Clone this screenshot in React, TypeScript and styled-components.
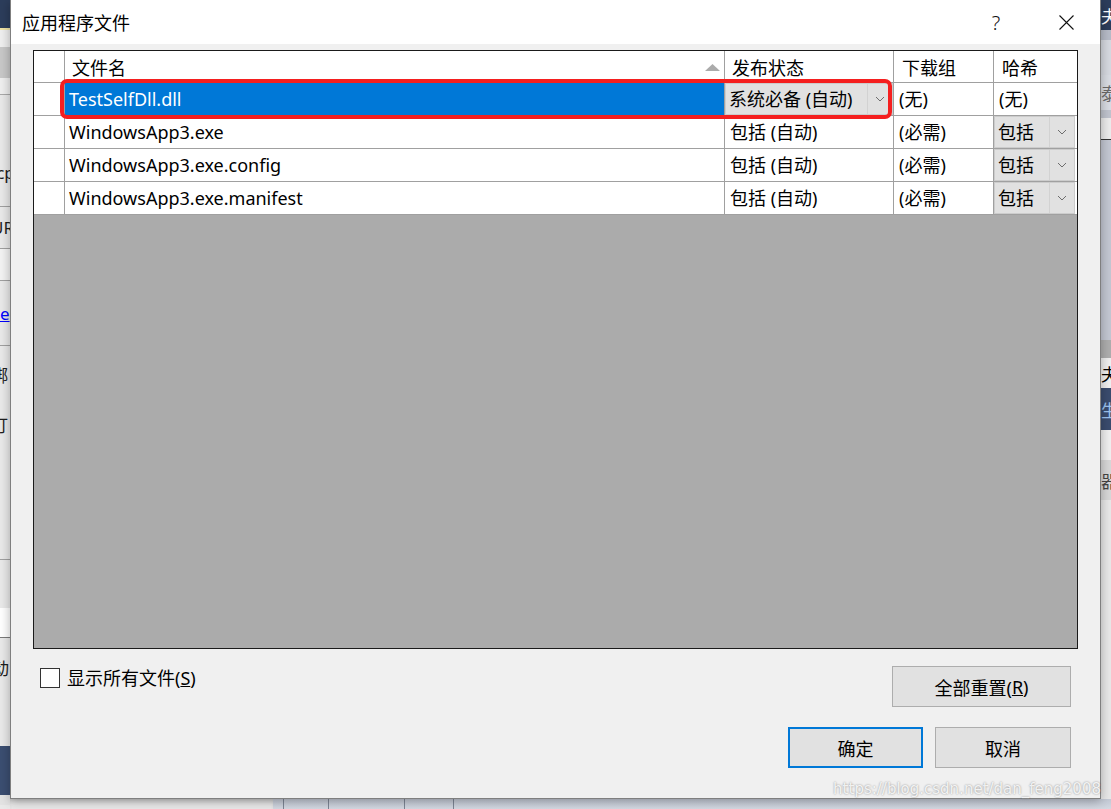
import React from "react";
import styled, { createGlobalStyle } from "styled-components";

const FONT = `"Noto Sans", "Noto Sans CJK SC", sans-serif`;

interface FileRow {
  name: string;
  status: string;
  statusCombo?: boolean;
  group: string;
  hash: string;
  hashCombo?: boolean;
  selected?: boolean;
}

const rows: FileRow[] = [
  { name: "TestSelfDll.dll", status: "系统必备 (自动)", statusCombo: true, group: "(无)", hash: "(无)", selected: true },
  { name: "WindowsApp3.exe", status: "包括 (自动)", group: "(必需)", hash: "包括", hashCombo: true },
  { name: "WindowsApp3.exe.config", status: "包括 (自动)", group: "(必需)", hash: "包括", hashCombo: true },
  { name: "WindowsApp3.exe.manifest", status: "包括 (自动)", group: "(必需)", hash: "包括", hashCombo: true },
];

interface BandSpec {
  h: number;
  bg: string;
  line?: string;
  text?: string;
  color?: string;
  shift?: number;
  link?: boolean;
}

// what shows of the Visual Studio window behind the dialog
const leftBands: BandSpec[] = [
  { h: 28, bg: "#2c3d5b" },
  { h: 2, bg: "#efe3a6" },
  { h: 17, bg: "#efefef" },
  { h: 31, bg: "#c8c8c8" },
  { h: 17, bg: "#efefef", line: "#a9a9a9" },
  { h: 44, bg: "#e9e9e9" },
  { h: 68, bg: "#e9e9e9", line: "#a0a0a0", text: "tcp", shift: -10 },
  { h: 42, bg: "#e9e9e9", line: "#a0a0a0", text: "URL", shift: -9 },
  { h: 32, bg: "#f3f3f3", line: "#a0a0a0" },
  { h: 65, bg: "#e9e9e9", line: "#a0a0a0", text: "e", shift: 0, link: true, color: "#0000ff" },
  { h: 56, bg: "#e9e9e9", text: "绑", shift: -9 },
  { h: 45, bg: "#e9e9e9", text: "订", shift: -9 },
  { h: 113, bg: "#e9e9e9", line: "#a0a0a0" },
  { h: 48, bg: "#e9e9e9" },
  { h: 30, bg: "#ffffff", line: "#7a7a7a" },
  { h: 58, bg: "#e9e9e9", text: "动", shift: -8 },
  { h: 50, bg: "#e9e9e9" },
  { h: 49, bg: "#3b4e71" },
  { h: 10, bg: "#e3e3e3" },
];

const rightBands: BandSpec[] = [
  { h: 30, bg: "#2c3d5b", text: "夬", color: "#ffffff" },
  { h: 10, bg: "#b7bcc8" },
  { h: 35, bg: "#d6d9e0" },
  { h: 35, bg: "#d9dce3", text: "泰", color: "#6a6a6a" },
  { h: 8, bg: "#c0c4ce" },
  { h: 22, bg: "#ececec", line: "#333333" },
  { h: 200, bg: "#c3c7d2" },
  { h: 18, bg: "#aeaeae" },
  { h: 30, bg: "#f0f0f0", text: "夬", color: "#000000" },
  { h: 42, bg: "#3a4c6e", text: "生", color: "#9cc4f0" },
  { h: 30, bg: "#f0f0f0" },
  { h: 40, bg: "#d8d8d8", text: "器", color: "#444444" },
  { h: 309, bg: "#e8e8e8" },
];

const GlobalStyle = createGlobalStyle`
  html, body {
    margin: 0;
    padding: 0;
  }
  body {
    width: 1111px;
    height: 809px;
    overflow: hidden;
    background: #e4e6eb;
    font-family: ${FONT};
    color: #000;
  }
`;

const Chevron = () => (
  <svg width="10" height="6" viewBox="0 0 10 6">
    <path d="M1 1 L5 5 L9 1" fill="none" stroke="#6d6d6d" strokeWidth="1" />
  </svg>
);

const CloseIcon = () => (
  <svg width="15" height="15" viewBox="0 0 15 15">
    <path d="M0.5 0.5 L14.5 14.5 M14.5 0.5 L0.5 14.5" stroke="#111" strokeWidth="1.1" />
  </svg>
);

const SortArrow = () => (
  <svg width="15" height="7" viewBox="0 0 15 7">
    <path d="M0 7 L7.5 0 L15 7 Z" fill="#ababab" />
  </svg>
);

const Combo = ({ text }: { text: string }) => (
  <ComboBox>
    <ComboText>{text}</ComboText>
    <ComboButton>
      <Chevron />
    </ComboButton>
  </ComboBox>
);

const Strip = ({ bands }: { bands: BandSpec[] }) => (
  <>
    {bands.map((b, i) => (
      <Band key={i} $h={b.h} $bg={b.bg} $line={b.line}>
        {b.text && (
          <BandText $shift={b.shift ?? 0} $color={b.color ?? "#1e1e1e"} $link={b.link}>
            {b.text}
          </BandText>
        )}
      </Band>
    ))}
  </>
);

export default function App() {
  return (
    <>
      <GlobalStyle />
      <Desktop>
        <LeftStrip>
          <Strip bands={leftBands} />
        </LeftStrip>

        <Dialog>
          <TitleBar>
            <Title>应用程序文件</Title>
            <HelpButton>?</HelpButton>
            <CloseButton>
              <CloseIcon />
            </CloseButton>
          </TitleBar>

          <Body>
            <TableFrame>
              <Table>
                <HeaderCell />
                <HeaderCell $pad={7}>
                  <span>文件名</span>
                  <SortSlot>
                    <SortArrow />
                  </SortSlot>
                </HeaderCell>
                <HeaderCell $pad={7}>发布状态</HeaderCell>
                <HeaderCell $pad={8}>下载组</HeaderCell>
                <HeaderCell $pad={8}>哈希</HeaderCell>

                {rows.map((r) => (
                  <React.Fragment key={r.name}>
                    <Cell />
                    <Cell $pad={4} $selected={r.selected}>
                      {r.name}
                    </Cell>
                    <Cell $pad={r.statusCombo ? 0 : 5}>
                      {r.statusCombo ? <Combo text={r.status} /> : r.status}
                    </Cell>
                    <Cell $pad={5}>{r.group}</Cell>
                    <Cell $pad={r.hashCombo ? 0 : 5} $padRight={r.hashCombo ? 2 : 0}>
                      {r.hashCombo ? <Combo text={r.hash} /> : r.hash}
                    </Cell>
                  </React.Fragment>
                ))}
              </Table>
              <Highlight />
            </TableFrame>

            <Footer>
              <CheckRow>
                <CheckBox />
                <CheckLabel>
                  显示所有文件(<u>S</u>)
                </CheckLabel>
              </CheckRow>
              <ResetButton>
                全部重置(<u>R</u>)
              </ResetButton>
              <span />
              <ButtonGroup>
                <DialogButton $primary>确定</DialogButton>
                <DialogButton>取消</DialogButton>
              </ButtonGroup>
            </Footer>
          </Body>
        </Dialog>

        <RightStrip>
          <Strip bands={rightBands} />
        </RightStrip>

        <BottomStrip>
          <BottomPanel />
          <Toolbar>
            <ToolSep />
            <ToolSep $gap={44} />
            <ToolSep $gap={75} />
            <ToolSep $gap={48} />
          </Toolbar>
        </BottomStrip>

        <Watermark>https://blog.csdn.net/dan_feng2008</Watermark>
      </Desktop>
    </>
  );
}

const Desktop = styled.div`
  position: relative;
  width: 1111px;
  height: 809px;
  display: grid;
  grid-template-columns: 10px 1091px 10px;
  grid-template-rows: 799px 10px;
  overflow: hidden;
`;

const LeftStrip = styled.div`
  grid-column: 1;
  grid-row: 1 / 3;
  display: flex;
  flex-direction: column;
  overflow: hidden;
  background: #e9e9e9;
`;

const RightStrip = styled.div`
  grid-column: 3;
  grid-row: 1;
  display: flex;
  flex-direction: column;
  overflow: hidden;
  background: #e8e8e8;
`;

const Band = styled.div<{ $h: number; $bg: string; $line?: string }>`
  flex: none;
  height: ${(p) => p.$h}px;
  background: ${(p) => p.$bg};
  box-sizing: border-box;
  border-bottom: ${(p) => (p.$line ? `1px solid ${p.$line}` : "none")};
  display: flex;
  align-items: center;
  overflow: hidden;
  white-space: nowrap;
`;

const BandText = styled.span<{ $shift: number; $color: string; $link?: boolean }>`
  margin-left: ${(p) => p.$shift}px;
  color: ${(p) => p.$color};
  font-size: 17px;
  text-decoration: ${(p) => (p.$link ? "underline" : "none")};
`;

const BottomStrip = styled.div`
  grid-column: 2 / 4;
  grid-row: 2;
  display: flex;
  background: #cfd4de;
`;

const BottomPanel = styled.div`
  width: 263px;
  background: #e8e8e8;
  box-shadow: inset 0 4px 4px -2px rgba(0, 0, 0, 0.15);
`;

const Toolbar = styled.div`
  flex: 1;
  display: flex;
  padding-left: 10px;
  background: linear-gradient(#c3c9d5, #d3d8e1);
`;

const ToolSep = styled.div<{ $gap?: number }>`
  width: 1px;
  margin-left: ${(p) => p.$gap ?? 0}px;
  background: #7d8594;
`;

const Dialog = styled.div`
  grid-column: 2;
  grid-row: 1;
  position: relative;
  z-index: 1;
  box-sizing: border-box;
  border: 1px solid #7f7f7f;
  border-top: none;
  background: #f0f0f0;
  display: flex;
  flex-direction: column;
  box-shadow: 0 2px 10px rgba(0, 0, 0, 0.3);
`;

const TitleBar = styled.div`
  height: 44px;
  flex: none;
  background: #ffffff;
  display: flex;
  align-items: center;
`;

const Title = styled.div`
  flex: 1;
  padding-left: 11px;
  font-size: 18px;
  color: #000;
`;

const HelpButton = styled.div`
  width: 72px;
  text-align: center;
  font-size: 20px;
  font-weight: 300;
  color: #111;
`;

const CloseButton = styled.div`
  width: 68px;
  height: 44px;
  display: flex;
  align-items: center;
  justify-content: center;
`;

const Body = styled.div`
  flex: 1;
  padding: 6px 22px 0;
  display: flex;
  flex-direction: column;
`;

const TableFrame = styled.div`
  position: relative;
  height: 599px;
  box-sizing: border-box;
  border: 1px solid #1a1a1a;
  background: #ababab;
`;

const Table = styled.div`
  display: grid;
  grid-template-columns: 30px 659px 168px 99px 83px;
  grid-template-rows: 31px repeat(4, 32px);
  gap: 1px;
  padding-bottom: 1px;
  background: #a0a0a0;
`;

const HeaderCell = styled.div<{ $pad?: number }>`
  background: #ffffff;
  display: flex;
  align-items: center;
  padding-left: ${(p) => p.$pad ?? 0}px;
  font-size: 18px;
  white-space: nowrap;
`;

const SortSlot = styled.span`
  margin-left: auto;
  margin-right: 4px;
  display: flex;
  padding-top: 2px;
`;

const Cell = styled.div<{ $pad?: number; $padRight?: number; $selected?: boolean }>`
  background: ${(p) => (p.$selected ? "#0078d7" : "#ffffff")};
  color: ${(p) => (p.$selected ? "#ffffff" : "#000000")};
  display: flex;
  align-items: stretch;
  padding-left: ${(p) => p.$pad ?? 0}px;
  padding-right: ${(p) => p.$padRight ?? 0}px;
  font-size: 18px;
  line-height: 32px;
  white-space: nowrap;
  overflow: hidden;
`;

const ComboBox = styled.div`
  flex: 1;
  display: flex;
  box-sizing: border-box;
  border: 1px solid #cccccc;
  background: #e1e1e1;
`;

const ComboText = styled.div`
  flex: 1;
  padding-left: 3px;
  line-height: 30px;
`;

const ComboButton = styled.div`
  width: 24px;
  border-left: 1px solid #d2d2d2;
  display: flex;
  align-items: center;
  justify-content: center;
`;

const Highlight = styled.div`
  position: absolute;
  left: 26px;
  top: 28px;
  width: 832px;
  height: 40px;
  box-sizing: border-box;
  border: 4px solid #f51f1f;
  border-radius: 7px;
  pointer-events: none;
`;

const Footer = styled.div`
  display: grid;
  grid-template-columns: 1fr auto;
  row-gap: 20px;
  padding: 17px 7px 0;
`;

const CheckRow = styled.div`
  display: flex;
  align-items: center;
  padding-top: 2px;
  align-self: start;
`;

const CheckBox = styled.div`
  width: 20px;
  height: 20px;
  box-sizing: border-box;
  border: 1px solid #333333;
  background: #ffffff;
`;

const CheckLabel = styled.span`
  margin-left: 7px;
  font-size: 18px;
  line-height: 20px;
`;

const ButtonBase = styled.div`
  height: 41px;
  box-sizing: border-box;
  display: flex;
  align-items: center;
  justify-content: center;
  background: #e1e1e1;
  border: 1px solid #adadad;
  font-size: 18px;
`;

const ResetButton = styled(ButtonBase)`
  width: 179px;
  justify-self: end;
`;

const ButtonGroup = styled.div`
  display: flex;
  gap: 12px;
`;

const DialogButton = styled(ButtonBase)<{ $primary?: boolean }>`
  width: ${(p) => (p.$primary ? 135 : 136)}px;
  border: ${(p) => (p.$primary ? "2px solid #0078d7" : "1px solid #adadad")};
`;

const Watermark = styled.div`
  position: absolute;
  right: 10px;
  bottom: 11px;
  z-index: 2;
  font-family: "DejaVu Sans", sans-serif;
  font-size: 15px;
  color: rgba(255, 255, 255, 0.85);
  text-shadow: 0 0 2px rgba(0, 0, 0, 0.45);
  white-space: nowrap;
`;
